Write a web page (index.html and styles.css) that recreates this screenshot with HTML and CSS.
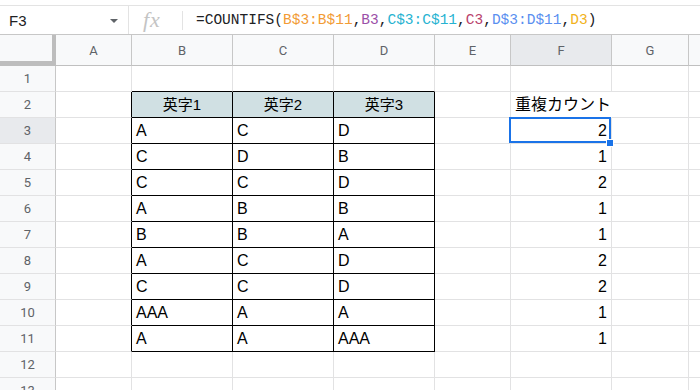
FILE: index.html
```
<!DOCTYPE html>
<html lang="ja">
<head>
<meta charset="utf-8">
<title>Sheet</title>
<link rel="stylesheet" href="styles.css">
</head>
<body>
<div class="fbar">
  <div class="namebox"><span class="nb-text">F3</span><span class="nb-arrow"></span></div>
  <div class="fx-area"><span class="fx">fx</span><span class="fx-div"></span></div>
  <div class="formula">=COUNTIFS(<span class="r1">B$3:B$11</span>,<span class="r2">B3</span>,<span class="r3">C$3:C$11</span>,<span class="r4">C3</span>,<span class="r5">D$3:D$11</span>,<span class="r6">D3</span>)</div>
</div>
<div class="sheet">
  <div class="corner"></div>
  <div class="ch">A</div><div class="ch">B</div><div class="ch">C</div><div class="ch">D</div><div class="ch">E</div><div class="ch active">F</div><div class="ch">G</div><div class="ch last"></div>

  <div class="rh">1</div><div class="c"></div><div class="c tt"></div><div class="c tt"></div><div class="c tt"></div><div class="c"></div><div class="c"></div><div class="c"></div><div class="c"></div>

  <div class="rh">2</div><div class="c tl"></div><div class="c t th">英字1</div><div class="c t th">英字2</div><div class="c t th">英字3</div><div class="c"></div><div class="c over">重複カウント</div><div class="c"></div><div class="c"></div>

  <div class="rh active">3</div><div class="c tl"></div><div class="c t">A</div><div class="c t">C</div><div class="c t">D</div><div class="c"></div><div class="c n sel">2<span class="selbox"></span><span class="handle"></span></div><div class="c"></div><div class="c"></div>

  <div class="rh">4</div><div class="c tl"></div><div class="c t">C</div><div class="c t">D</div><div class="c t">B</div><div class="c"></div><div class="c n">1</div><div class="c"></div><div class="c"></div>

  <div class="rh">5</div><div class="c tl"></div><div class="c t">C</div><div class="c t">C</div><div class="c t">D</div><div class="c"></div><div class="c n">2</div><div class="c"></div><div class="c"></div>

  <div class="rh">6</div><div class="c tl"></div><div class="c t">A</div><div class="c t">B</div><div class="c t">B</div><div class="c"></div><div class="c n">1</div><div class="c"></div><div class="c"></div>

  <div class="rh">7</div><div class="c tl"></div><div class="c t">B</div><div class="c t">B</div><div class="c t">A</div><div class="c"></div><div class="c n">1</div><div class="c"></div><div class="c"></div>

  <div class="rh">8</div><div class="c tl"></div><div class="c t">A</div><div class="c t">C</div><div class="c t">D</div><div class="c"></div><div class="c n">2</div><div class="c"></div><div class="c"></div>

  <div class="rh">9</div><div class="c tl"></div><div class="c t">C</div><div class="c t">C</div><div class="c t">D</div><div class="c"></div><div class="c n">2</div><div class="c"></div><div class="c"></div>

  <div class="rh">10</div><div class="c tl"></div><div class="c t">AAA</div><div class="c t">A</div><div class="c t">A</div><div class="c"></div><div class="c n">1</div><div class="c"></div><div class="c"></div>

  <div class="rh">11</div><div class="c tl"></div><div class="c t">A</div><div class="c t">A</div><div class="c t">AAA</div><div class="c"></div><div class="c n">1</div><div class="c"></div><div class="c"></div>

  <div class="rh">12</div><div class="c"></div><div class="c"></div><div class="c"></div><div class="c"></div><div class="c"></div><div class="c"></div><div class="c"></div><div class="c"></div>

  <div class="rh">13</div><div class="c"></div><div class="c"></div><div class="c"></div><div class="c"></div><div class="c"></div><div class="c"></div><div class="c"></div><div class="c"></div>
</div>
</body>
</html>
```
FILE: styles.css
```
* { box-sizing: border-box; }
html, body { margin: 0; padding: 0; background: #fff; }
body {
  width: 700px;
  height: 390px;
  overflow: hidden;
  font-family: "Liberation Sans", Arial, "Noto Sans CJK JP", sans-serif;
  color: #000;
}

/* formula bar */
.fbar {
  margin-top: 5px;
  height: 30px;
  border-top: 1px solid #e3e3e3;
  border-bottom: 1px solid #c7c7c7;
  display: flex;
  align-items: stretch;
}
.namebox {
  width: 129px;
  border-right: 1px solid #e3e3e3;
  display: flex;
  align-items: center;
  padding-left: 9px;
  padding-right: 10px;
}
.nb-text {
  font-size: 15px;
  color: #202124;
  flex: 1;
}
.nb-arrow {
  width: 0;
  height: 0;
  border-left: 4px solid transparent;
  border-right: 4px solid transparent;
  border-top: 4px solid #5f6368;
  margin-top: 2px;
}
.fx-area {
  width: 54px;
  display: flex;
  align-items: center;
  position: relative;
}
.fx {
  font-family: "Liberation Serif", serif;
  font-style: italic;
  font-size: 22px;
  letter-spacing: 1px;
  color: #c4c4c4;
  margin-left: 14px;
  line-height: 1;
}
.fx-div {
  position: absolute;
  right: 0;
  top: 5px;
  bottom: 4px;
  width: 1px;
  background: #e3e3e3;
}
.formula {
  display: flex;
  align-items: center;
  padding-left: 13px;
  font-family: "Liberation Mono", "DejaVu Sans Mono", monospace;
  font-size: 14.5px;
  color: #202124;
  white-space: pre;
}
.r1 { color: #f29b35; }
.r2 { color: #9b4fa8; }
.r3 { color: #27b3d1; }
.r4 { color: #b9436c; }
.r5 { color: #5a8ff0; }
.r6 { color: #f2b21a; }

/* grid */
.sheet {
  display: grid;
  grid-template-columns: 56px 76px 101px 101px 101px 76px 101px 77px 40px;
  grid-template-rows: 31px repeat(13, 26px);
}
.corner {
  background: #f8f9fa;
  border-right: 4px solid #bdbdbd;
  border-bottom: 5px solid #bdbdbd;
}
.ch {
  background: #f8f9fa;
  border-right: 1px solid #c7c7c7;
  border-bottom: 1px solid #c0c0c0;
  display: flex;
  align-items: center;
  justify-content: center;
  font-family: Roboto, "Liberation Sans", sans-serif;
  font-size: 13px;
  color: #5f6368;
}
.ch.active, .rh.active { background: #e8eaed; }
.rh {
  background: #f8f9fa;
  border-right: 1px solid #c7c7c7;
  border-bottom: 1px solid #e2e2e3;
  display: flex;
  align-items: center;
  justify-content: center;
  font-family: Roboto, "Liberation Sans", sans-serif;
  font-size: 13px;
  color: #5f6368;
}
.c {
  border-right: 1px solid #e2e2e3;
  border-bottom: 1px solid #e2e2e3;
  display: flex;
  align-items: flex-end;
  padding: 0 4px 3px 4px;
  font-size: 16px;
  line-height: 18px;
  white-space: nowrap;
  position: relative;
}
.c.t {
  border-right-color: #000;
  border-bottom-color: #000;
}
.c.tl { border-right-color: #000; }
.c.tt { border-bottom-color: #000; }
.c.th {
  background: #d0e0e3;
  justify-content: center;
  font-size: 15px;
}
.c.over {
  border-right-color: #fff;
  overflow: visible;
}
.c.n { justify-content: flex-end; }
.selbox {
  position: absolute;
  top: -1px;
  left: -2px;
  right: 0;
  bottom: 0;
  border: 2px solid #1a73e8;
}
.handle {
  position: absolute;
  right: -3px;
  bottom: -4px;
  width: 8px;
  height: 8px;
  background: #1a73e8;
  border: 1px solid #fff;
  z-index: 2;
}
```
